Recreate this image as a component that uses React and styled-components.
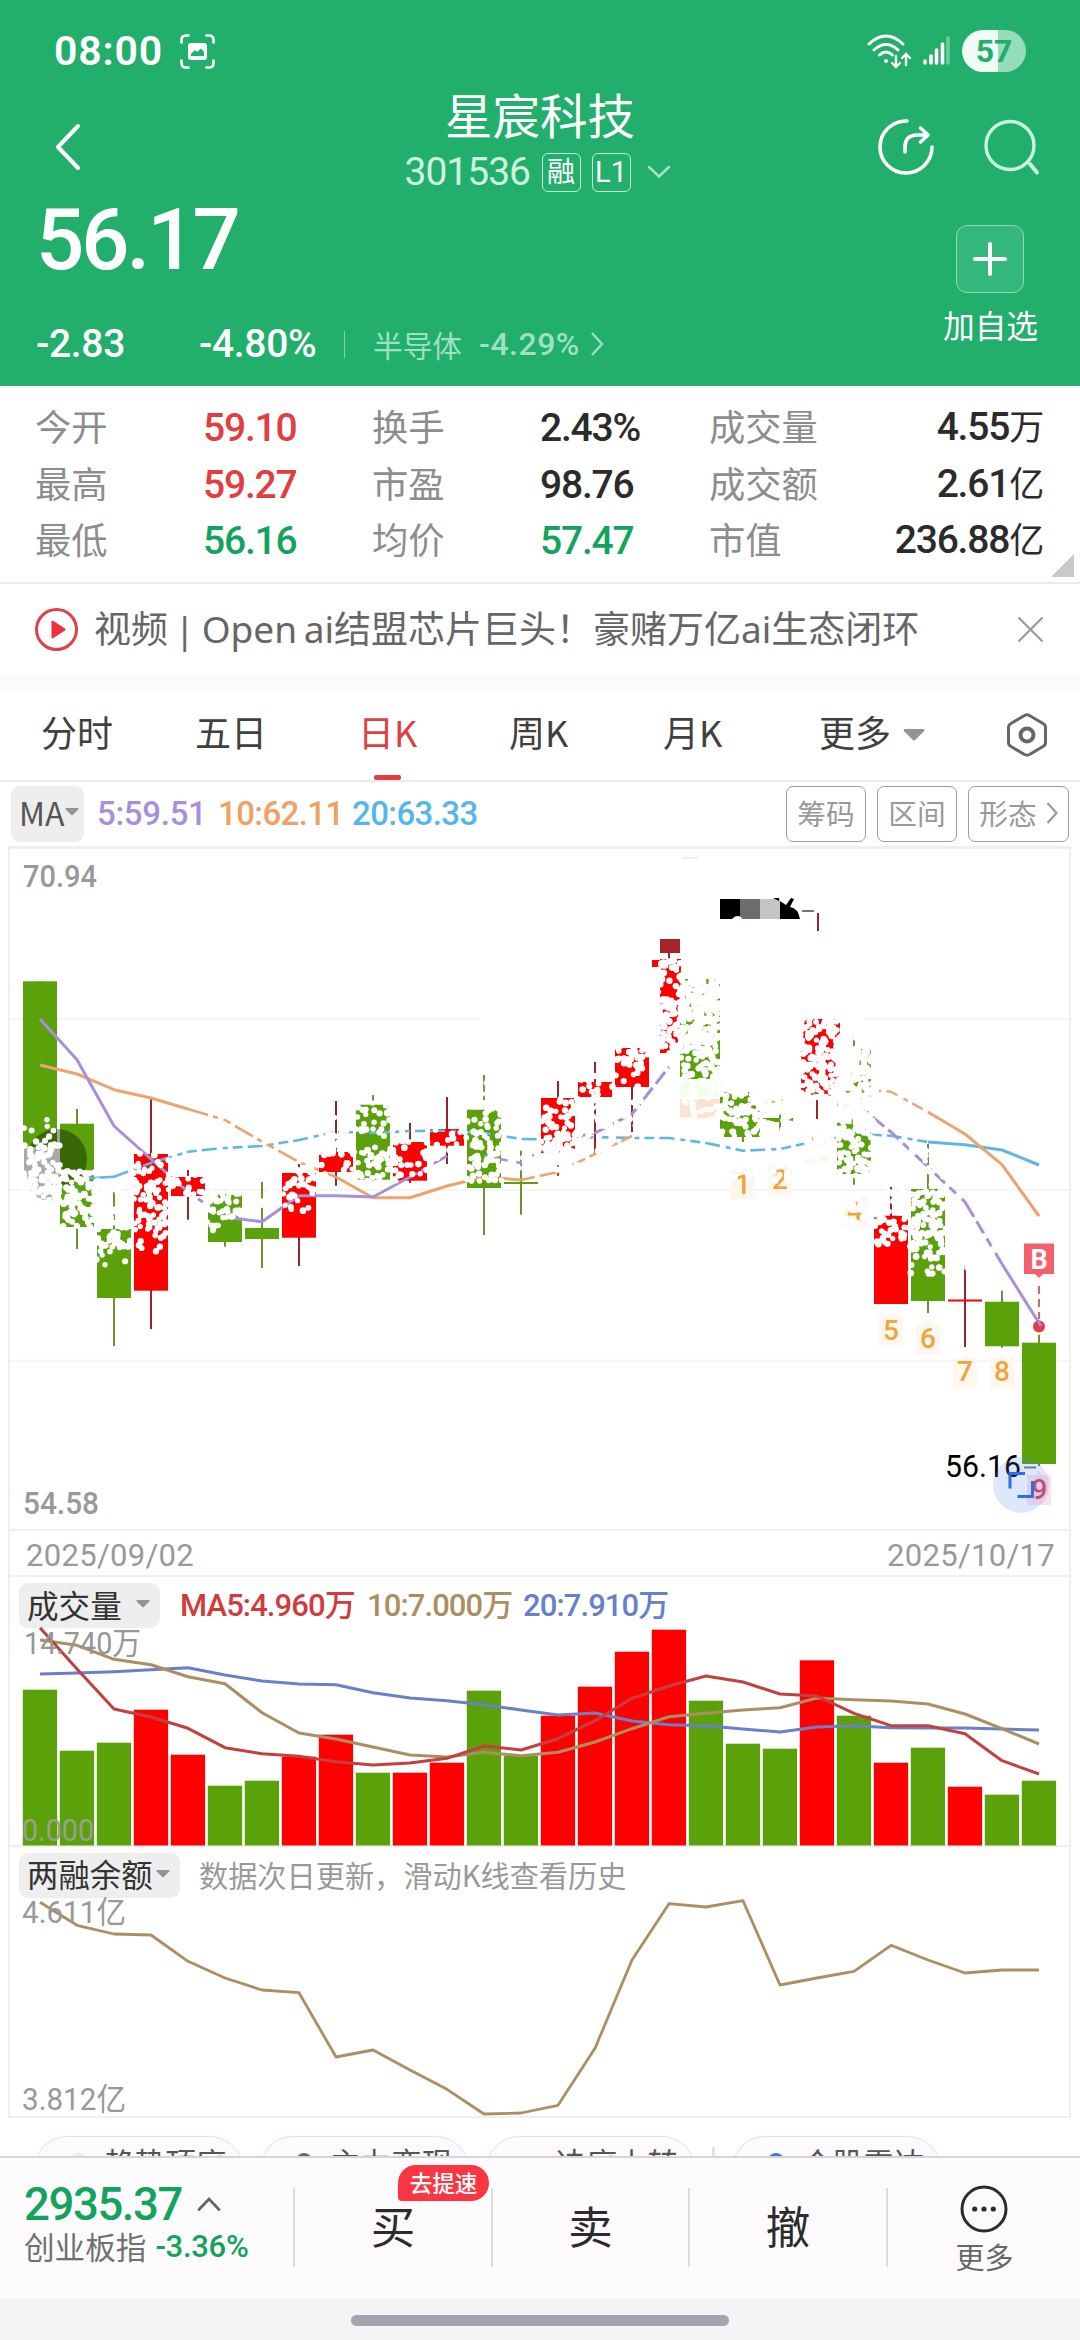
import React from "react";
import styled, { createGlobalStyle } from "styled-components";

const NUM = `Roboto, "Noto Sans CJK SC", sans-serif`;
const CJK = `"Noto Sans CJK SC", sans-serif`;
const UP = "#fe0000";
const DOWN = "#5ba10a";
const RED = "#e03e41";
const GREEN = "#12a45d";

const Global = createGlobalStyle`
  * { box-sizing: border-box; }
  body { margin: 0; background: #fff; font-family: ${NUM}; }
  svg { display: block; overflow: visible; flex: none; }
`;

const Screen = styled.div`
  width: 1080px;
  height: 2340px;
  overflow: hidden;
  display: flex;
  flex-direction: column;
  background: #fff;
  white-space: nowrap;
`;

/* ---------- header ---------- */
const Header = styled.header`
  height: 386px;
  flex: none;
  background: #22ae6b;
  color: #fff;
  display: flex;
  flex-direction: column;
`;
const StatusBar = styled.div`
  height: 82px;
  padding: 20px 54px 0 54px;
  display: flex;
  align-items: center;
`;
const Clock = styled.span`
  font-size: 41px;
  font-weight: 600;
  letter-spacing: 0.8px;
  line-height: 48px;
  width: 126px;
`;
const StatusIcons = styled.div`
  margin-left: auto;
  display: flex;
  align-items: center;
  gap: 12px;
`;
const Battery = styled.div`
  width: 64px;
  height: 42px;
  border-radius: 21px;
  background: linear-gradient(90deg, #effcf6 57%, #95dcbb 57%);
  color: #22ae6b;
  font-size: 32px;
  font-weight: 700;
  line-height: 43px;
  text-align: center;
`;
const NavRow = styled.div`
  height: 118px;
  display: grid;
  grid-template-columns: 1fr auto 1fr;
  padding: 0 41px 0 54px;
`;
const NavSide = styled.div`
  height: 64px;
  margin-top: 33px;
  display: flex;
  align-items: center;
  gap: 51px;
  justify-content: ${(p) => (p.$end ? "flex-end" : "flex-start")};
`;
const TitleBlock = styled.div`
  width: 300px;
  margin-right: 13px;
  display: flex;
  flex-direction: column;
  align-items: center;
`;
const Title = styled.h1`
  margin: 4px 0 0;
  font: 400 47.5px/56px ${CJK};
`;
const CodeRow = styled.div`
  display: flex;
  align-items: center;
  height: 44px;
  margin: 8px 0 0;
`;
const Code = styled.span`
  font-size: 39px;
  letter-spacing: -1px;
  color: #cdf4e0;
  width: 137px;
`;
const Tag = styled.span`
  width: 39px;
  height: 39px;
  margin-right: 11px;
  border: 1.5px solid #c5efd9;
  border-radius: 6px;
  text-align: center;
  font-size: ${(p) => (p.$latin ? 29 : 28)}px;
  line-height: 37px;
`;
const Quote = styled.div`
  flex: 1;
  display: flex;
  justify-content: space-between;
  padding: 0 42px 0 36px;
`;
const QuoteMain = styled.div`
  display: flex;
  flex-direction: column;
`;
const Price = styled.div`
  font-size: 85px;
  font-weight: 500;
  line-height: 80px;
  letter-spacing: -3px;
`;
const ChangeRow = styled.div`
  display: flex;
  align-items: center;
  height: 48px;
  margin-top: 40px;
`;
const Change = styled.span`
  width: ${(p) => p.$w}px;
  font-size: 39px;
  font-weight: 500;
  letter-spacing: -0.3px;
`;
const Rule = styled.i`
  width: 1px;
  height: 27px;
  margin-right: 28px;
  background: #7fd0a8;
`;
const Sector = styled.span`
  font-size: 29.7px;
  color: #9fe0c1;
  width: 106px;
`;
const SectorPct = styled(Sector)`
  font-size: 32px;
  font-weight: 500;
  letter-spacing: 0.5px;
  width: 111px;
`;
const AddBlock = styled.div`
  display: flex;
  flex-direction: column;
  align-items: center;
  padding-top: 25px;
`;
const AddButton = styled.div`
  width: 68px;
  height: 68px;
  border-radius: 11px;
  border: 1.5px solid #92d9b7;
  background: #34b77a;
  display: grid;
  place-items: center;
`;
const AddLabel = styled.span`
  margin-top: 9px;
  font: 400 31.7px/44px ${CJK};
`;

/* ---------- statistics ---------- */
const Stats = styled.section`
  height: 198px;
  flex: none;
  border-bottom: 2px solid #ebebeb;
  padding: 14px 6px 0 35px;
  display: flex;
  position: relative;
`;
const StatGrid = styled.div`
  display: grid;
  grid-template-columns: 168px 169px 168px 169px 110px 224px;
  grid-auto-rows: 56.5px;
  align-items: center;
`;
const StatLabel = styled.span`
  font: 400 36.3px/50px ${CJK};
  color: #8d8d8d;
  padding-bottom: 6px;
`;
const StatValue = styled.span`
  font-size: 39px;
  font-weight: 500;
  letter-spacing: -1.2px;
  line-height: 50px;
  color: ${(p) => p.$color || "#2b2b2b"};
  text-align: ${(p) => (p.$end ? "right" : "left")};
`;
const Unit = styled.span`
  font-size: 35px;
  font-weight: 400;
`;
const Corner = styled.i`
  position: absolute;
  right: 6px;
  bottom: 5px;
  border-style: solid;
  border-width: 0 0 23px 23px;
  border-color: transparent transparent #c9c9c9 transparent;
`;

/* ---------- news banner ---------- */
const Banner = styled.section`
  height: 90px;
  flex: none;
  display: flex;
  align-items: center;
  padding: 0 36px 0 34px;
`;
const BannerText = styled.span`
  flex: 1;
  margin-left: 15px;
  font: 400 37px/50px "Noto Sans", "Noto Sans CJK SC", sans-serif;
  word-spacing: -3px;
  color: #666;
`;
const Strip = styled.div`
  height: 16px;
  flex: none;
  background: #fdfafe;
`;

/* ---------- tabs ---------- */
const Tabs = styled.nav`
  height: 92px;
  flex: none;
  display: flex;
  padding-left: 41px;
  border-bottom: 2px solid #ebebeb;
`;
const Tab = styled.div`
  width: ${(p) => p.$w}px;
  display: flex;
  align-items: center;
  gap: 12px;
  font: 400 36px/50px ${CJK};
  color: ${(p) => (p.$active ? RED : "#404040")};
`;
const TabLabel = styled.span`
  height: 90px;
  line-height: 83px;
  display: flex;
  flex-direction: column;
  align-items: center;
  &::after {
    content: "";
    width: 27px;
    height: 5px;
    border-radius: 2px;
    margin-top: 2px;
    background: ${(p) => (p.$active ? RED : "transparent")};
  }
`;
const Indicators = styled.div`
  height: 65px;
  flex: none;
  display: flex;
  align-items: center;
  padding: 0 11px;
  margin-top: -1px;
`;
const Picker = styled.div`
  height: ${(p) => p.$h}px;
  width: ${(p) => p.$w}px;
  padding: 0 0 4px 8px;
  display: flex;
  align-items: center;
  gap: ${(p) => p.$gap}px;
  border-radius: 9px;
  background: #eeeeee;
  color: ${(p) => p.$color || "#333"};
  font: 400 ${(p) => p.$size}px/40px ${CJK};
`;
const MaValue = styled.span`
  width: ${(p) => p.$w}px;
  padding-left: ${(p) => p.$pl || 0}px;
  font-size: ${(p) => p.$size}px;
  font-weight: ${(p) => p.$weight || 500};
  letter-spacing: ${(p) => p.$ls || 0}px;
  line-height: 40px;
  color: ${(p) => p.$color};
`;
const Ghost = styled.div`
  height: 56px;
  width: ${(p) => p.$w}px;
  margin-left: 11px;
  padding-bottom: 2px;
  border: 1.5px solid #9d9d9d;
  border-radius: 7px;
  display: flex;
  align-items: center;
  justify-content: center;
  gap: 9px;
  font: 400 28.7px/40px ${CJK};
  color: #999;
`;

/* ---------- chart panels ---------- */
const Panel = styled.section`
  width: 1063px;
  height: ${(p) => p.$h}px;
  flex: none;
  margin-left: 8px;
  border: 2px solid #efefef;
  border-top-width: ${(p) => p.$top || 0}px;
`;
const PanelHead = styled.div`
  height: 51px;
  padding: 6px 0 0 9px;
  display: flex;
  align-items: center;
`;
const DateRow = styled(Panel)`
  display: flex;
  justify-content: space-between;
  align-items: center;
  padding: 4px 14px 0 16px;
  font-size: 31px;
  letter-spacing: 0.3px;
  color: #999;
`;
const Hint = styled.span`
  margin: 0 0 3px 19px;
  font: 400 29.2px/40px ${CJK};
  color: #999;
`;

/* ---------- bottom ---------- */
const Chips = styled.div`
  height: 38px;
  flex: none;
  overflow: hidden;
  display: flex;
  align-items: flex-start;
  padding: 18px 0 0 34px;
  gap: 17px;
`;
const Chip = styled.div`
  width: 209px;
  height: 66px;
  flex: none;
  border: 1.5px solid #e3e1e4;
  border-radius: 33px;
  background: #fdfafe;
  display: flex;
  align-items: flex-start;
  padding: 8px 0 0 27px;
  font: 400 30.6px/34px ${CJK};
  color: #555;
`;
const ChipDot = styled.i`
  width: 16px;
  height: 16px;
  margin: 8px 18px 0 8px;
  flex: none;
  border-radius: 50%;
  background: ${(p) => p.$color};
`;
const ChipRule = styled.i`
  width: 3px;
  height: 40px;
  margin-top: 11px;
  background: #e3e3e3;
`;
const Trade = styled.footer`
  height: 143px;
  flex: none;
  border-top: 2px solid #d5d4d7;
  background: #fefbff;
  display: flex;
  align-items: flex-start;
`;
const IndexBlock = styled.div`
  width: 293px;
  padding: 18px 0 0 24px;
`;
const IndexTop = styled.div`
  display: flex;
  align-items: center;
  gap: 15px;
  height: 56px;
  font-size: 45.5px;
  font-weight: 500;
  letter-spacing: -1.4px;
  color: ${GREEN};
`;
const IndexBottom = styled.div`
  display: flex;
  align-items: center;
  gap: 9px;
  height: 34px;
  margin-top: -3px;
  font-size: 30.6px;
  color: #707070;
`;
const IndexPct = styled.span`
  font-weight: 500;
  font-size: 31px;
  letter-spacing: -0.3px;
  color: ${GREEN};
`;
const Action = styled.div`
  width: ${(p) => p.$w || 198}px;
  height: 79px;
  margin-top: 30px;
  border-left: 2px solid #dddcdf;
  position: relative;
  display: flex;
  flex-direction: column;
  align-items: center;
  font: 400 44.5px/73px ${CJK};
  color: #2c2c2c;
`;
const Badge = styled.span`
  position: absolute;
  left: 103px;
  top: -23px;
  width: 91px;
  height: 36px;
  border-radius: 18px 18px 18px 4px;
  background: #f93642;
  color: #fff;
  text-align: center;
  font: 500 22.5px/34px ${CJK};
`;
const More = styled.div`
  margin: -3px 0 0 1px;
  display: flex;
  flex-direction: column;
  align-items: center;
  font: 400 29px/40px ${CJK};
  color: #666;
  gap: 3px;
`;
const NavArea = styled.div`
  flex: 1;
  background: #f6f3f7;
  display: flex;
  justify-content: center;
  padding-top: 16px;
`;
const Handle = styled.i`
  width: 378px;
  height: 11px;
  border-radius: 6px;
  background: #a4a5ac;
`;

/* ---------- chart data ---------- */
const cx = (i) => 40 + 37 * i;

const candles = [
  [0, 982, 982.3, 1148, 1151],
  [0, 1110, 1124.7, 1228, 1250],
  [0, 1193, 1230, 1299, 1347],
  [1, 1100, 1155, 1291.7, 1330],
  [1, 1171, 1178, 1197, 1220.7],
  [0, 1195, 1195.7, 1243, 1247.7],
  [0, 1183, 1229, 1240, 1269],
  [1, 1165, 1174, 1238.7, 1267],
  [1, 1102, 1153, 1173, 1186.7],
  [0, 1096, 1105.7, 1180.7, 1182],
  [1, 1124, 1143, 1181.7, 1184],
  [1, 1098, 1130, 1146.7, 1165],
  [0, 1076, 1110.7, 1189, 1236],
  [0, 1144, 1183, 1185, 1215.7],
  [1, 1082, 1099, 1154, 1176.7],
  [1, 1063, 1083, 1098, 1155],
  [1, 1042, 1049, 1088, 1133],
  [1, 954, 960, 1054, 1054],
  [0, 980, 980, 1080, 1080],
  [0, 1090, 1093, 1138, 1143],
  [0, 1098, 1119, 1123, 1136],
  [1, 1100, 1020, 1099, 1120],
  [0, 1037, 1050, 1175, 1185.7],
  [1, 1188, 1216.7, 1305, 1305],
  [0, 1145, 1190, 1302, 1314],
  [1, 1266.7, 1300.5, 1302.5, 1348],
  [0, 1291.7, 1302.7, 1347.3, 1348.7],
  [0, 1335.7, 1343.7, 1465, 1467],
];
/* bodies whose box is not the usual 34px round the centre */
const bodyBox = { 17: [660, 21], 18: [680, 40], 19: [720, 40], 21: [801, 39] };

const ma5 = [1020, 1060.7, 1127, 1160, 1193, 1218, 1222.7, 1196.7, 1196.7, 1198, 1178, 1157, 1157, 1164, 1141, 1134, 1115, 1068, 1064, 1062, 1067, 1078, 1103, 1133, 1168, 1203, 1265, 1324];
const ma10 = [1066, 1075, 1090.7, 1099, 1110, 1121, 1142.7, 1163, 1178, 1198.7, 1198.7, 1187, 1178, 1181, 1173, 1155, 1137, 1115, 1112, 1106.7, 1101.7, 1092, 1090, 1092.7, 1113, 1135, 1165.7, 1217];
const ma20 = [1181, 1180, 1177.7, 1164, 1152.7, 1149, 1147, 1141, 1132.7, 1134, 1132, 1131.7, 1134, 1140, 1140.7, 1138, 1139, 1139, 1144, 1151.7, 1150, 1141.7, 1135, 1136.7, 1143, 1145.7, 1151, 1166];

const volumes = [1689.7, 1750.7, 1742.7, 1709.7, 1754.7, 1785.7, 1780.7, 1756.7, 1734.7, 1772.7, 1772.7, 1762.7, 1690.7, 1755.7, 1715.7, 1686.7, 1651.7, 1629.7, 1700.7, 1743.7, 1748.7, 1660.3, 1715.7, 1762.7, 1747.7, 1786.7, 1794.7, 1780.7];
const vma5 = [1627.7, 1669, 1709, 1717, 1728.3, 1747.7, 1753.7, 1756.3, 1761.7, 1765, 1763, 1758.3, 1746, 1750, 1738.7, 1720.7, 1698.3, 1686, 1676, 1682, 1694, 1696, 1713.3, 1725.7, 1725.7, 1733.7, 1760.7, 1774];
const vma10 = [1640, 1645.3, 1659.3, 1664.7, 1676.7, 1683.7, 1712.7, 1733, 1739, 1747, 1755, 1757, 1752.3, 1755.7, 1752.3, 1742, 1728.7, 1716.7, 1713.3, 1710, 1707.7, 1698, 1699.7, 1701, 1704, 1714, 1728.7, 1744];
const vma20 = [1674, 1673, 1671.7, 1669.7, 1667.7, 1675, 1681, 1684, 1684.7, 1692.7, 1698, 1700.7, 1704.7, 1710, 1715, 1713, 1721, 1724.7, 1725.7, 1729, 1732, 1727, 1725.7, 1727.7, 1728, 1728, 1729, 1730];
const margin = [1902.3, 1925.3, 1934, 1935, 1961.3, 1978, 1990, 1992.7, 2057, 2050, 2070, 2089.3, 2114, 2113, 2105.3, 2048.3, 1960, 1903.7, 1907, 1900.7, 1985, 1978, 1971.3, 1945.3, 1960, 1973, 1970, 1970];

/* white speckles: x, y, width, height, covered share */
const speckles = [
  [23, 1120, 34, 30, 0.25], [23, 1146, 37, 26, 0.6], [23, 1170, 37, 34, 0.87],
  [62, 1172, 36, 58, 0.72], [96, 1186, 36, 42, 0.4], [95, 1226, 36, 22, 0.65], [95, 1246, 36, 20, 0.32],
  [133, 1152, 36, 30, 0.4], [133, 1180, 36, 46, 0.62], [133, 1224, 36, 32, 0.35],
  [170, 1170, 36, 25, 0.55], [206, 1193, 36, 26, 0.68], [206, 1218, 22, 14, 0.4], [255, 1180, 16, 28, 0.4],
  [281, 1164, 36, 50, 0.42], [318, 1115, 36, 62, 0.33], [355, 1104, 38, 34, 0.5], [355, 1148, 38, 34, 0.55],
  [392, 1140, 36, 42, 0.42], [430, 1126, 36, 40, 0.28], [466, 1080, 36, 54, 0.5], [466, 1132, 36, 50, 0.58],
  [503, 1144, 36, 34, 0.4], [541, 1098, 36, 36, 0.5], [541, 1132, 36, 42, 0.74],
  [577, 1066, 36, 36, 0.42], [577, 1104, 36, 50, 0.5], [614, 1040, 36, 24, 0.76], [614, 1062, 36, 26, 0.26], [614, 1100, 36, 32, 0.4],
  [658, 960, 26, 44, 0.6], [658, 1000, 26, 54, 0.8], [680, 980, 40, 64, 0.92], [680, 1040, 40, 42, 0.7],
  [680, 1080, 42, 42, 0.45], [720, 1090, 40, 24, 0.82], [720, 1112, 40, 26, 0.55], [758, 1096, 40, 42, 0.6],
  [798, 1018, 44, 42, 0.8], [798, 1058, 44, 42, 0.8], [805, 1124, 28, 36, 0.86],
  [836, 1037, 40, 50, 0.87], [836, 1085, 40, 50, 0.95], [836, 1135, 40, 42, 0.68],
  [874, 1190, 35, 56, 0.55], [910, 1148, 36, 42, 0.3], [910, 1188, 36, 34, 0.65], [910, 1220, 36, 40, 0.72], [910, 1256, 36, 20, 0.35],
  [962, 1266, 6, 26, 0.2], [730, 1166, 26, 14, 0.5], [767, 1162, 26, 20, 0.5], [843, 1198, 24, 26, 0.6],
];
const dots = (() => {
  let seed = 90210;
  const rnd = () => (seed = (seed * 16807) % 2147483647) / 2147483647;
  return speckles.flatMap(([x, y, w, h, share]) => {
    const n = Math.round((-Math.log(1 - share) * w * h) / 27);
    return Array.from({ length: n }, () => [x + rnd() * w, y + rnd() * h, 2.6 + rnd() * 0.8]);
  });
})();

const pts = (arr, a = 0, b = arr.length - 1) =>
  arr.slice(a, b + 1).map((y, k) => `${cx(a + k)},${y}`).join(" ");

const Line = ({ data, color, a, b, dash, w = 3 }) => (
  <polyline points={pts(data, a, b)} fill="none" stroke={color} strokeWidth={w} strokeLinejoin="round" strokeDasharray={dash} />
);

const Label = ({ x, y, w, size = 31, fill = "#999", weight = 400, children }) => (
  <text x={x} y={y} textLength={w} lengthAdjust="spacingAndGlyphs" fontSize={size} fill={fill} fontWeight={weight} fontFamily={NUM}>
    {children}
  </text>
);

const Caret = ({ w = 14 }) => (
  <svg width={w} height={w * 0.55} viewBox="0 0 20 11">
    <path d="M1 0h18q1 1 0 2l-8 8q-1 1-2 0L1 2q-1-1 0-2z" fill="#949494" />
  </svg>
);

const CandleChart = () => {
  const p = "#a78fdc", o = "#eca46f", b = "#5fb7e6";
  return (
    <svg width="1059" height="678" viewBox="10 850 1059 678">
      {[1020, 1191, 1361.7].map((y) => (
        <path key={y} d={`M10 ${y}H1069`} stroke="#f5f5f5" strokeWidth="2" />
      ))}
      <rect x="480" y="1015" width="385" height="10" fill="#fff" />
      <rect x="24" y="1148" width="34" height="54" fill="#aaa" />
      {candles.map(([up, hi, top, bot, lo], i) => {
        const [bx, bw] = bodyBox[i] || [cx(i) - 17, 34];
        return (
          <g key={i}>
            <path d={`M${cx(i)} ${hi}V${lo}`} stroke={up ? "#96262b" : "#6b9430"} strokeWidth="2" />
            <rect x={bx} y={top} width={bw} height={bot - top} fill={up ? UP : DOWN} />
          </g>
        );
      })}
      <clipPath id="touch">
        <path d="M23 1120h34v28h-34zM54 1120h45v70h-45z" />
      </clipPath>
      <circle cx="57" cy="1160" r="30" fill="#000" opacity=".36" clipPath="url(#touch)" />
      <rect x="24" y="1148" width="36" height="42" fill="#a9aaa8" />
      <path d="M652 961h8v7h-8z" fill={UP} />
      <rect x="680" y="1080" width="42" height="18" fill="#f2fdea" />
      <rect x="680" y="1100" width="40" height="19" fill="#fce3cf" />
      <Line data={ma20} color={b} a={1} b={2} w={2.6} />
      <Line data={ma20} color={b} a={2} b={24} w={2.6} dash="15 6 5 5 10 5" />
      <Line data={ma20} color={b} a={24} b={27} />
      <Line data={ma10} color={o} a={0} b={4} />
      <Line data={ma10} color={o} a={4} b={8} dash="21 5 5 6 8 5" w={2.6} />
      <Line data={ma10} color={o} a={8} b={13} />
      <Line data={ma10} color={o} a={13} b={16} dash="14 5 20 5 6 4" w={2.6} />
      <Line data={ma10} color={o} a={19} b={24} dash="12 7 5 5" w={2.4} />
      <Line data={ma10} color={o} a={24} b={27} />
      <Line data={ma5} color={p} a={0} b={4} />
      <Line data={ma5} color={p} a={4} b={5} dash="6 6" />
      <Line data={ma5} color={p} a={5} b={9} />
      <Line data={ma5} color={p} a={9} b={11} dash="50 5 7 5" w={2.6} />
      <Line data={ma5} color={p} a={12} b={15} dash="24 9 10 8" w={2.6} />
      <Line data={ma5} color={p} a={15} b={17} dash="15 5" />
      <Line data={ma5} color={p} a={22} b={26} dash="9 8 22 5 14 6" />
      <Line data={ma5} color={p} a={26} b={27} />

      {[
        [1, 743, 1170, 1195], [2, 780, 1166, 1190], [3, 817, 1134, 1156], [4, 855, 1198, 1221],
        [5, 891, 1317, 1341], [6, 928, 1325, 1349], [7, 965, 1359, 1382], [8, 1002, 1359, 1382],
      ].map(([n, x, top, base]) => (
        <g key={n}>
          <path d={`M${x - 12} ${top}h9l3-4 3 4h9v30h-24z`} fill="#fff6ee" />
          <text x={x} y={base} textAnchor="middle" fontSize="28" fontWeight="500" fontFamily={NUM} fill="#efa53c">{n}</text>
        </g>
      ))}
      <g fill="#fff">
        {dots.map(([x, y, r], i) => (
          <circle key={i} cx={x} cy={y} r={r} />
        ))}
      </g>

      <rect x="660" y="940" width="20" height="14" fill="#a5242b" />
      <path d="M720 900h20v20h-20z" fill="#000" />
      <path d="M740 900h20v20h-20z" fill="#6b6d6a" />
      <path d="M760 900h20v20h-20z" fill="#c4c3c6" />
      <path d="M732 920q4-5 9-2l1 2z" fill="#fff" />
      <path d="M773 899h6v3zM780 902l6 4 5-7 3 1-4 8q8 1 10 12h-20z" fill="#000" />
      <path d="M802 912h12" stroke="#777" strokeWidth="2" />
      <path d="M818 914v18" stroke="#96262b" strokeWidth="2" />
      <path d="M682 859h16" stroke="#eee" strokeWidth="2" />

      <path d="M1039 1287v33" stroke="#e0606e" strokeWidth="2" strokeDasharray="8 5" />
      <circle cx="1039" cy="1327.5" r="6" fill="#e63c49" />
      <path d="M1038 1322l3 5" stroke={p} strokeWidth="3" />
      <path d="M1024 1244.5h30v30.5h-11l-4 4-4-4h-11z" fill="#f3606c" />
      <text x="1039" y="1269.5" textAnchor="middle" fontSize="27" fontWeight="700" fontFamily={NUM} fill="#fff">B</text>

      <path d="M1027 1476h9l3-4 3 4h9v30h-24z" fill="#ffe0e5" />
      <text x="1039.5" y="1500" textAnchor="middle" fontSize="28" fontWeight="500" fontFamily={NUM} fill="#e03f58">9</text>
      <Label x={945} y={1478} w={76} fill="#000">56.16</Label>
      <path d="M1024 1468.5h12" stroke="#777" strokeWidth="2" />
      <circle cx="1021" cy="1486" r="28" fill="#4a86f5" opacity=".19" />
      <path d="M1025 1474.5h-15v15M1032.5 1482v15.5h-15" stroke="#2f6fe4" strokeWidth="3" fill="none" />

      <Label x={23} y={888} w={74} weight={500}>70.94</Label>
      <Label x={23} y={1515} w={76} weight={500}>54.58</Label>
    </svg>
  );
};

const VolumeChart = () => (
  <svg width="1059" height="217" viewBox="10 1628 1059 217">
    {volumes.map((y, i) => (
      <rect key={i} x={cx(i) - 17.2} y={y} width="34.3" height={1845.5 - y} fill={candles[i][0] ? UP : DOWN} />
    ))}
    <Line data={vma20} color="#6a80c8" />
    <Line data={vma10} color="#ab8f62" />
    <Line data={vma5} color="#c43f3f" />
    <Label x={24} y={1654} w={117} fill="#969696">14.740万</Label>
    <Label x={22} y={1840.5} w={72} fill="#9aa08f">0.000</Label>
  </svg>
);

const MarginChart = () => (
  <svg width="1059" height="217" viewBox="10 1898 1059 217">
    <Line data={margin} color="#ab8f62" w={2.8} />
    <Label x={22} y={1923} w={104}>4.611亿</Label>
    <Label x={22} y={2110} w={104}>3.812亿</Label>
  </svg>
);

const stats = [
  ["今开", "59.10", RED, "换手", "2.43%", null, "成交量", "4.55", "万"],
  ["最高", "59.27", RED, "市盈", "98.76", null, "成交额", "2.61", "亿"],
  ["最低", "56.16", GREEN, "均价", "57.47", GREEN, "市值", "236.88", "亿"],
];

export default function App() {
  return (
    <Screen>
      <Global />
      <Header>
        <StatusBar>
          <Clock>08:00</Clock>
          <svg width="35" height="35" viewBox="0 0 35 35" fill="none" stroke="#fff" strokeWidth="2.6" strokeLinecap="round">
            <path d="M1.5 8.500V6q0-4.500 4.500-4.500h2.500M26.500 1.500H29q4.500 0 4.500 4.500v2.500M33.500 26.500V29q0 4.500-4.500 4.500h-2.500M8.500 33.500H6q-4.500 0-4.500-4.500v-2.500" />
            <rect x="8" y="9" width="19" height="17" rx="3" fill="#fff" stroke="none" />
            <path d="M11 22v-2l4-4 2 2 4-3.500 3 3.500v4z" fill="#22ae6b" stroke="none" />
          </svg>
          <StatusIcons>
            <svg width="44" height="34" viewBox="0 0 44 34" fill="none" stroke="#fff" strokeWidth="3" strokeLinecap="round">
              <path d="M2 10Q19-6 36 10M7 16q12-11 24 0M12.500 21q6.500-6 13 0" />
              <circle cx="19" cy="27" r="2" fill="#fff" stroke="none" />
              <path d="M29 22v10M25 29l4 4 4-4M39 31V21M35 24l4-4 4 4" strokeWidth="2.4" />
            </svg>
            <svg width="27" height="30" viewBox="0 0 27 30" strokeWidth="3.6" strokeLinecap="round" stroke="#fff">
              <path d="M2 25v2M8 20v7M13.500 14v13M19.500 8v19" />
              <path d="M25 2v25" opacity=".35" />
            </svg>
            <Battery>57</Battery>
          </StatusIcons>
        </StatusBar>
        <NavRow>
          <NavSide>
            <svg width="28" height="48" viewBox="0 0 28 48" fill="none" stroke="#fff" strokeWidth="4" strokeLinecap="round" strokeLinejoin="round">
              <path d="M24 3L4 24l20 21" />
            </svg>
          </NavSide>
          <TitleBlock>
            <Title>星宸科技</Title>
            <CodeRow>
              <Code>301536</Code>
              <Tag>融</Tag>
              <Tag $latin>L1</Tag>
              <svg width="34" height="14" viewBox="-6 0 34 14" fill="none" stroke="#a5e3c5" strokeWidth="2.5" strokeLinecap="round">
                <path d="M1 2l10 9.500L21 2" />
              </svg>
            </CodeRow>
          </TitleBlock>
          <NavSide $end>
            <svg width="55" height="56" viewBox="0 0 55 56" fill="none" stroke="#fff" strokeWidth="3.6" strokeLinecap="round" strokeLinejoin="round">
              <path d="M28 2A26 26 0 1 0 53 28" />
              <path d="M26 33v-5q0-12 12-12h10M41.500 9l7.500 7-7.500 7" />
            </svg>
            <svg width="54" height="56" viewBox="0 0 54 56" fill="none" stroke="#c8f5df" strokeWidth="3.4" strokeLinecap="round">
              <circle cx="25" cy="26.5" r="24" />
              <path d="M45 45l7 8.500" strokeWidth="4" />
            </svg>
          </NavSide>
        </NavRow>
        <Quote>
          <QuoteMain>
            <Price>56.17</Price>
            <ChangeRow>
              <Change $w={163}>-2.83</Change>
              <Change $w={145}>-4.80%</Change>
              <Rule />
              <Sector>半导体</Sector>
              <SectorPct>-4.29%</SectorPct>
              <svg width="14" height="24" viewBox="0 0 14 24" fill="none" stroke="#9fe0c1" strokeWidth="2.4">
                <path d="M2 1l10 11L2 23" />
              </svg>
            </ChangeRow>
          </QuoteMain>
          <AddBlock>
            <AddButton>
              <svg width="34" height="34" viewBox="0 0 34 34" stroke="#fff" strokeWidth="4" strokeLinecap="round">
                <path d="M17 2v30M2 17h30" />
              </svg>
            </AddButton>
            <AddLabel>加自选</AddLabel>
          </AddBlock>
        </Quote>
      </Header>

      <Stats>
        <StatGrid>
          {stats.map((r) => (
            <React.Fragment key={r[0]}>
              <StatLabel>{r[0]}</StatLabel>
              <StatValue $color={r[2]}>{r[1]}</StatValue>
              <StatLabel>{r[3]}</StatLabel>
              <StatValue $color={r[5]}>{r[4]}</StatValue>
              <StatLabel>{r[6]}</StatLabel>
              <StatValue $end>{r[7]}<Unit>{r[8]}</Unit></StatValue>
            </React.Fragment>
          ))}
        </StatGrid>
        <Corner />
      </Stats>

      <Banner>
        <svg width="45" height="45" viewBox="0 0 45 45">
          <circle cx="22.5" cy="22.5" r="20" fill="none" stroke="#e04048" strokeWidth="3" />
          <path d="M17.500 14.500q0-1.500 1.500-.8l12 7.800q1 1 0 2l-12 7.800q-1.500.7-1.500-.8z" fill="#ee2f3c" />
        </svg>
        <BannerText>视频 | Open ai结盟芯片巨头！豪赌万亿ai生态闭环</BannerText>
        <svg width="27" height="27" viewBox="0 0 27 27" stroke="#999" strokeWidth="2.2">
          <path d="M1.500 1.500l24 24M25.500 1.500l-24 24" />
        </svg>
      </Banner>
      <Strip />

      <Tabs>
        <Tab $w={154}><TabLabel>分时</TabLabel></Tab>
        <Tab $w={163}><TabLabel>五日</TabLabel></Tab>
        <Tab $w={151} $active><TabLabel $active>日K</TabLabel></Tab>
        <Tab $w={154}><TabLabel>周K</TabLabel></Tab>
        <Tab $w={156}><TabLabel>月K</TabLabel></Tab>
        <Tab $w={187}><TabLabel>更多</TabLabel><Caret w={22} /></Tab>
        <Tab $w={44}>
          <svg width="42" height="44" viewBox="0 0 42 44" fill="none" stroke="#666" strokeWidth="3" strokeLinejoin="round">
            <path d="M18.500 2.500q2.500-1.300 5 0l13.500 8q2.500 1.300 2.500 4v15q0 2.700-2.500 4l-13.500 8q-2.500 1.300-5 0L5 33.500q-2.500-1.300-2.500-4v-15q0-2.700 2.500-4z" />
            <circle cx="21" cy="22" r="6.5" strokeWidth="4" />
          </svg>
        </Tab>
      </Tabs>

      <Indicators>
        <Picker $h={56} $w={73} $gap={1} $size={32} $color="#555">MA<Caret w={14} /></Picker>
        <MaValue $w={134} $pl={13} $size={33} $color="#a78fe0" $ls={-0.3}>5:59.51</MaValue>
        <MaValue $w={134} $size={33} $color="#f0a066" $ls={-0.6}>10:62.11</MaValue>
        <MaValue $w={423} $size={33} $color="#55b6ea" $ls={-0.6}>20:63.33</MaValue>
        <Ghost $w={80}>筹码</Ghost>
        <Ghost $w={80}>区间</Ghost>
        <Ghost $w={101}>
          形态
          <svg width="12" height="22" viewBox="0 0 12 22" fill="none" stroke="#999" strokeWidth="2.2">
            <path d="M1.500 1l9 10-9 10" />
          </svg>
        </Ghost>
      </Indicators>

      <Panel $h={685} $top={3}><CandleChart /></Panel>
      <DateRow $h={46}>
        <span>2025/09/02</span>
        <span>2025/10/17</span>
      </DateRow>
      <Panel $h={270}>
        <PanelHead>
          <Picker $h={45} $w={141} $gap={14} $size={31.6}>成交量<Caret /></Picker>
          <MaValue $w={207} $pl={20} $size={31} $color="#d03c3c" $ls={-0.9}>MA5:4.960万</MaValue>
          <MaValue $w={156} $size={31} $color="#ab8f62" $ls={-0.9}>10:7.000万</MaValue>
          <MaValue $w={160} $size={31} $color="#6680cc" $ls={-0.9}>20:7.910万</MaValue>
        </PanelHead>
        <VolumeChart />
      </Panel>
      <Panel $h={271}>
        <PanelHead>
          <Picker $h={45} $w={161} $gap={3} $size={31.4}>两融余额<Caret /></Picker>
          <Hint>数据次日更新，滑动K线查看历史</Hint>
        </PanelHead>
        <MarginChart />
      </Panel>

      <Chips>
        <Chip><ChipDot $color="#f0edf1" />趋势顶底</Chip>
        <Chip><ChipDot $color="#666" />主力变现</Chip>
        <Chip><ChipDot $color="transparent" />决底上转</Chip>
        <ChipRule />
        <Chip><ChipDot $color="#3c74e0" />个股雷达</Chip>
      </Chips>
      <Trade>
        <IndexBlock>
          <IndexTop>
            2935.37
            <svg width="24" height="14" viewBox="0 0 24 14" fill="none" stroke="#666" strokeWidth="2.8" strokeLinecap="round">
              <path d="M2 12.500L12 2l10 10.500" />
            </svg>
          </IndexTop>
          <IndexBottom>创业板指<IndexPct>-3.36%</IndexPct></IndexBottom>
        </IndexBlock>
        <Action>买<Badge>去提速</Badge></Action>
        <Action $w={197}>卖</Action>
        <Action>撤</Action>
        <Action $w={194}>
          <More>
            <svg width="48" height="48" viewBox="0 0 48 48" fill="#2c2c2c">
              <circle cx="24" cy="24" r="22" fill="none" stroke="#2c2c2c" strokeWidth="3" />
              <circle cx="14.7" cy="24" r="2.6" />
              <circle cx="24" cy="24" r="2.6" />
              <circle cx="33.3" cy="24" r="2.6" />
            </svg>
            更多
          </More>
        </Action>
      </Trade>
      <NavArea><Handle /></NavArea>
    </Screen>
  );
}
